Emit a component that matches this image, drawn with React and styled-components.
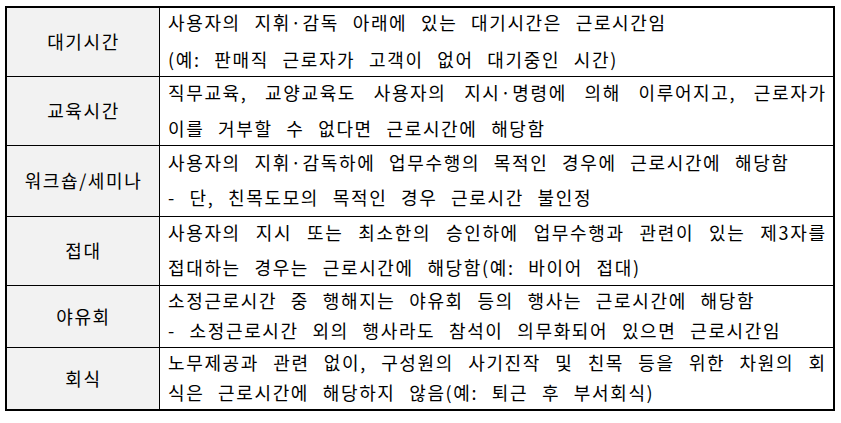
import React from 'react';
import styled, { createGlobalStyle } from 'styled-components';

const GlobalStyle = createGlobalStyle`
  html, body {
    margin: 0;
    padding: 0;
    background: #ffffff;
  }
  body {
    font-family: "Noto Sans CJK KR", "Noto Sans", sans-serif;
    color: #000000;
  }
`;

const Page = styled.div`
  width: 841px;
  height: 423px;
  padding: 6px 0 0 5px;
  box-sizing: border-box;
`;

const Table = styled.div`
  width: 830px;
  box-sizing: border-box;
  border: 2px solid #000;
`;

const Row = styled.div`
  display: grid;
  grid-template-columns: 152px 1px 1fr;
  grid-template-rows: ${(p) => p.$height}px;
  border-top: ${(p) => (p.$first ? 'none' : '1px solid #000')};
`;

const Label = styled.div`
  display: flex;
  align-items: center;
  justify-content: center;
  background: #f2f2f2;
  font-size: 18px;
  letter-spacing: 1.6px;
  white-space: nowrap;
  padding-left: 1px;
  padding-bottom: 2px;
`;

const Divider = styled.div`
  background: #000;
`;

const Body = styled.div`
  min-height: 0;
  display: flex;
  flex-direction: column;
  justify-content: center;
  padding: 0 8px 3px 8px;
  font-size: 18px;
  letter-spacing: 1.64px;
  word-spacing: 8px;
  line-height: ${(p) => p.$lineHeight}px;
`;

const Line = styled.div`
  white-space: ${(p) => (p.$justify ? 'normal' : 'nowrap')};
  text-align: ${(p) => (p.$justify ? 'justify' : 'left')};
  text-align-last: ${(p) => (p.$justify ? 'justify' : 'left')};
  margin-right: ${(p) => (p.$justify ? '-1.6px' : '0')};
`;

const rows = [
  {
    label: '대기시간',
    height: 68,
    lh: 37,
    lines: [
      { text: '사용자의 지휘·감독 아래에 있는 대기시간은 근로시간임' },
      { text: '(예: 판매직 근로자가 고객이 없어 대기중인 시간)' },
    ],
  },
  {
    label: '교육시간',
    height: 68,
    lh: 36,
    lines: [
      { text: '직무교육, 교양교육도 사용자의 지시·명령에 의해 이루어지고, 근로자가', justify: true },
      { text: '이를 거부할 수 없다면 근로시간에 해당함' },
    ],
  },
  {
    label: '워크숍/세미나',
    height: 70,
    lh: 35,
    lines: [
      { text: '사용자의 지휘·감독하에 업무수행의 목적인 경우에 근로시간에 해당함' },
      { text: '- 단, 친목도모의 목적인 경우 근로시간 불인정' },
    ],
  },
  {
    label: '접대',
    height: 68,
    lh: 35,
    lines: [
      { text: '사용자의 지시 또는 최소한의 승인하에 업무수행과 관련이 있는 제3자를', justify: true },
      { text: '접대하는 경우는 근로시간에 해당함(예: 바이어 접대)' },
    ],
  },
  {
    label: '야유회',
    height: 61,
    lh: 30,
    lines: [
      { text: '소정근로시간 중 행해지는 야유회 등의 행사는 근로시간에 해당함' },
      { text: '- 소정근로시간 외의 행사라도 참석이 의무화되어 있으면 근로시간임' },
    ],
  },
  {
    label: '회식',
    height: 61,
    lh: 30,
    lines: [
      { text: '노무제공과 관련 없이, 구성원의 사기진작 및 친목 등을 위한 차원의 회', justify: true },
      { text: '식은 근로시간에 해당하지 않음(예: 퇴근 후 부서회식)' },
    ],
  },
];

export default function App() {
  return (
    <>
      <GlobalStyle />
      <Page>
        <Table>
          {rows.map((row, i) => (
            <Row key={row.label} $height={row.height} $first={i === 0}>
              <Label>{row.label}</Label>
              <Divider />
              <Body $lineHeight={row.lh}>
                {row.lines.map((line) => (
                  <Line key={line.text} $justify={line.justify}>
                    {line.text}
                  </Line>
                ))}
              </Body>
            </Row>
          ))}
        </Table>
      </Page>
    </>
  );
}
